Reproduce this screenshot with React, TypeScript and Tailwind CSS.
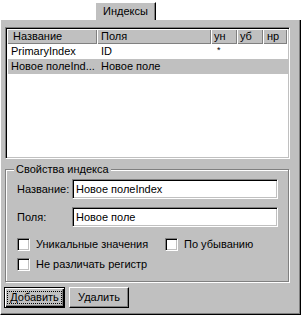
const sunken =
  "border border-t-[#808080] border-l-[#808080] border-r-white border-b-white shadow-[inset_1px_1px_0_#000,inset_-1px_-1px_0_#c0c0c0]";

function Header() {
  const cell = "h-[15px] flex items-center shadow-[inset_1px_1px_0_#fff,inset_-1px_-1px_0_#808080] bg-[#c0c0c0]";
  return (
    <div className="flex">
      <div className={`${cell} w-[90px] pl-[6px]`}>Название</div>
      <div className={`${cell} w-[114px] pl-[4px]`}>Поля</div>
      <div className={`${cell} w-[26px] pl-[3px]`}>ун</div>
      <div className={`${cell} w-[26px] pl-[3px]`}>уб</div>
      <div className={`${cell} w-[24px] pl-[4px]`}>нр</div>
    </div>
  );
}

function Row({ name, fields, un, selected }: { name: string; fields: string; un?: string; selected?: boolean }) {
  return (
    <div className={`flex h-[15px] items-center ml-px w-[280px] ${selected ? "bg-[#c0c0c0]" : ""}`}>
      <div className="w-[89px] pl-[3px] whitespace-nowrap overflow-hidden">{name}</div>
      <div className="w-[114px] pl-[4px]">{fields}</div>
      <div className="w-[26px] pl-[6px] self-start text-[9px] leading-[10px] pt-px">{un}</div>
    </div>
  );
}

function Field({ label, value, className = "" }: { label: string; value: string; className?: string }) {
  return (
    <div className={`flex items-center h-[20px] ${className}`}>
      <div className="w-[55px]">{label}</div>
      <div className={`w-[206px] h-[20px] bg-white ${sunken} pl-[3px] flex items-center`}>{value}</div>
    </div>
  );
}

function Check({ label, className = "" }: { label: string; className?: string }) {
  return (
    <div className={`flex items-center h-[13px] ${className}`}>
      <div className={`w-[13px] h-[13px] bg-white ${sunken}`} />
      <div className="ml-[6px] whitespace-nowrap">{label}</div>
    </div>
  );
}

export default function App() {
  return (
    <div className="w-[302px] h-[316px] bg-white font-['Liberation_Sans',Arial,sans-serif] text-[11px] leading-[13px] text-black">
      <div className="h-[20px] flex items-end">
        <div className="ml-[95px] h-[18px] w-[61px] bg-[#c0c0c0] border-t border-l border-r border-t-white border-l-white border-r-black shadow-[inset_-1px_0_0_#808080] flex items-center justify-center pb-px">
          Индексы
        </div>
      </div>
      <div className="w-[301px] h-[295px] bg-[#c0c0c0] border-l border-r border-b border-l-white border-r-black border-b-black shadow-[inset_-1px_-1px_0_#808080] pl-[4px] pt-[7px] flex flex-col">
        <div className={`w-[285px] h-[132px] bg-white ${sunken} p-px`}>
          <Header />
          <Row name="PrimaryIndex" fields="ID" un="*" />
          <Row name="Новое полеInd..." fields="Новое поле" selected />
        </div>

        <div className="relative mt-[10px] w-[284px] h-[113px] border border-[#808080] shadow-[inset_1px_1px_0_#fff,1px_1px_0_#fff] pl-[11px] pt-[9px]">
          <span className="absolute left-[8px] -top-[7px] px-[2px] bg-[#c0c0c0]">Свойства индекса</span>
          <Field label="Название:" value="Новое полеIndex" />
          <Field label="Поля:" value="Новое поле" className="mt-[8px]" />
          <div className="flex mt-[11px]">
            <Check label="Уникальные значения" className="w-[148px]" />
            <Check label="По убыванию" />
          </div>
          <Check label="Не различать регистр" className="mt-[7px]" />
        </div>

        <div className="flex gap-[4px] mt-[5px] -ml-px">
          <div className="w-[61px] h-[21px] border border-black shadow-[inset_1px_1px_0_#fff,inset_-1px_-1px_0_#000,inset_-2px_-2px_0_#808080] flex items-center justify-center">
            <span className="border border-dotted border-black px-[2px] leading-[11px]">Добавить</span>
          </div>
          <div className="w-[60px] h-[21px] border border-t-white border-l-white border-r-black border-b-black shadow-[inset_-1px_-1px_0_#808080] flex items-center justify-center">
            Удалить
          </div>
        </div>
      </div>
    </div>
  );
}
